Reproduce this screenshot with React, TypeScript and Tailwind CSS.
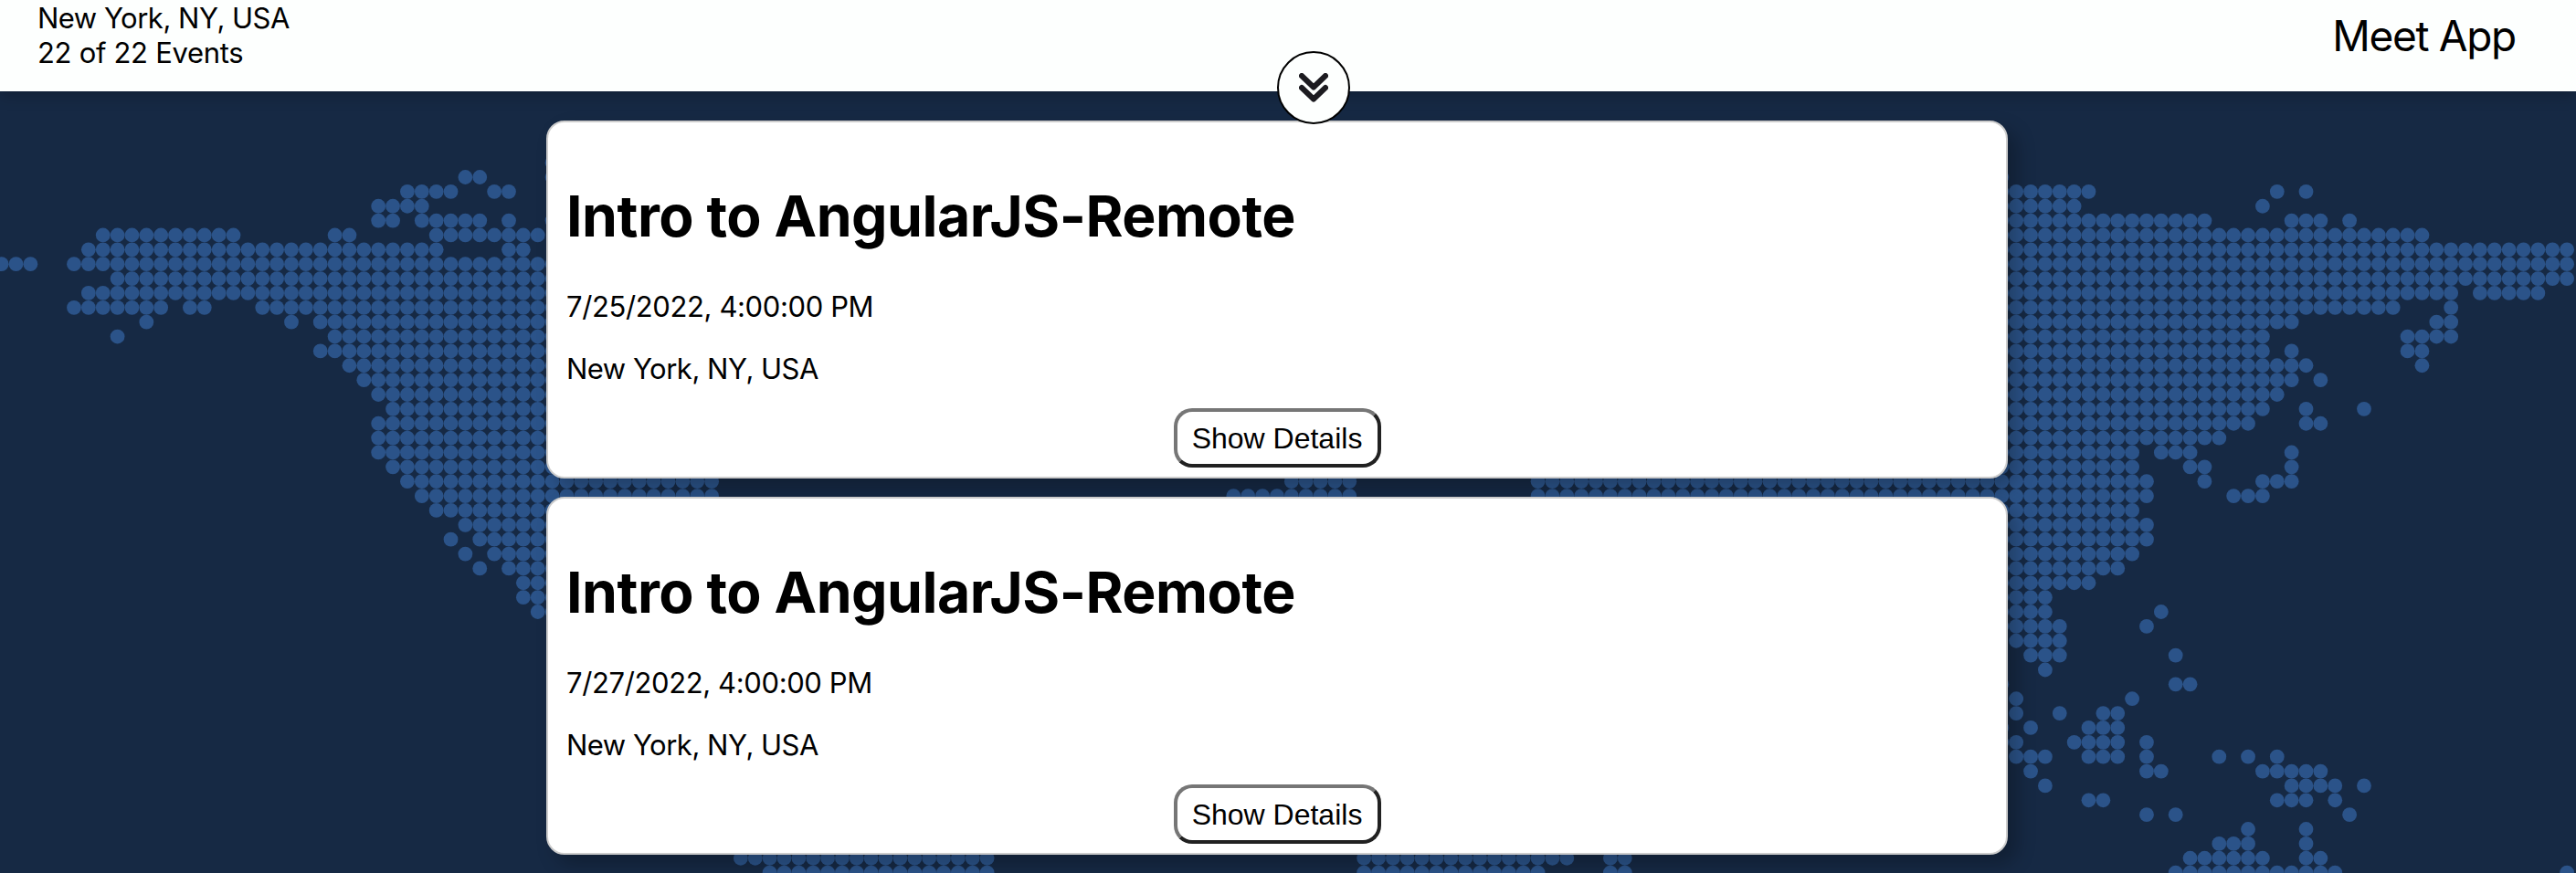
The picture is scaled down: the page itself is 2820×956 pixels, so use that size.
const PITCH = 15.867;

// Filled column ranges of the dotted world map, by row.
const MAP_ROWS: [number, string][] = [
  [-1, '38'],
  [0, '32-33 38 138'],
  [1, '28-31 34-35 138-144 157 159'],
  [2, '26-29 138-143 156'],
  [3, '26-27 29-33 35 38 138-152 158-160 162'],
  [4, '7-16 23-24 30-37 138-167'],
  [5, '6-30 35-36 138-177'],
  [6, '0-2 5-38 138-177'],
  [7, '8-38 138-177'],
  [8, '6-38 138-169 171-175'],
  [9, '5-11 13-14 18-38 138-165 169'],
  [10, '10 20 22-38 138-158 168-169'],
  [11, '8 23-38 138-156 166-169'],
  [12, '22-38 138-156 158 166-167'],
  [13, '24-38 138-159 167'],
  [14, '25-38 138-158 160'],
  [15, '26-38 138-157'],
  [16, '27-38 138-156 159 163'],
  [17, '26-38 138-155 159-160'],
  [18, '26-38 138-153'],
  [19, '26-38 138-147 149-151 158'],
  [20, '27-38 138-147 151-152 158'],
  [21, '28-49 89-93 106-148 152 156-158'],
  [22, '29-49 85-93 106-148 154-156'],
  [23, '30-38 138-147'],
  [24, '32-38 138-148'],
  [25, '31 33-38 138-148'],
  [26, '32 34-38 138-147'],
  [27, '33 35-38 138-146'],
  [28, '36-38 138-144'],
  [29, '36-38 138-141'],
  [30, '37-38 138-141 149'],
  [31, '138-142 148'],
  [32, '139-142'],
  [33, '140-142 150'],
  [34, '141'],
  [35, '138 150-151'],
  [36, '139 147'],
  [37, '139 142 145-146'],
  [38, '138 140 144-146'],
  [39, '138-139 143-146 148'],
  [40, '139-141 144-146 148 153 155 157'],
  [41, '140 148-149 156-160'],
  [42, '141 158-161 163'],
  [43, '144-145 157-159 161'],
  [44, '148 150 162'],
  [45, '155 159'],
  [46, '153-155 159'],
  [47, '51-68 94-108 111-112 151-156 159-160'],
  [48, '53-68 94-106 111-112 150-161 177'],
];

function WorldMap() {
  const dots = MAP_ROWS.flatMap(([row, spans]) =>
    spans.split(' ').flatMap((span) => {
      const [from, to = from] = span.split('-').map(Number);
      return Array.from({ length: to - from + 1 }, (_, i) => (
        <circle key={`${row}-${from + i}`} cx={1.65 + (from + i) * PITCH} cy={194 + row * PITCH} r={7.9} />
      ));
    }),
  );
  return (
    <svg className="absolute inset-0 h-full w-full fill-[#2b5389]" viewBox="0 0 2820 956" aria-hidden="true">
      {dots}
    </svg>
  );
}

function EventCard({ date }: { date: string }) {
  return (
    <li className="flex h-[392px] w-[1600px] flex-col rounded-[20px] border-2 border-[#ccc] bg-white px-5 shadow-[10px_10px_20px_rgba(0,0,0,0.25)]">
      <h1 className="mt-[64px] text-[62.5px] leading-[76px] font-bold tracking-[-0.48px] whitespace-nowrap">Intro to AngularJS-Remote</h1>
      <p className="mt-[43px] text-[31px] leading-[38px] tracking-[-0.38px]">{date}</p>
      <p className="mt-[30px] text-[31px] leading-[38px] tracking-[-0.5px]">New York, NY, USA</p>
      <button className="mt-[24px] h-[65px] w-[227px] self-center rounded-[20px] border-4 border-t-[#767676] border-r-[#212121] border-b-[#212121] border-l-[#767676] bg-white font-['Liberation_Sans',sans-serif] text-[32px] leading-none whitespace-nowrap">
        Show Details
      </button>
    </li>
  );
}

export default function App() {
  return (
    <div className="relative h-[956px] w-full overflow-hidden bg-[#162944] font-['Inter',sans-serif] text-black">
      <WorldMap />
      <header className="relative z-10 flex h-[100px] justify-between bg-[#fdfffe] shadow-[0_4px_16px_rgba(0,0,0,0.25)]">
        <div className="pt-px pl-[41px] text-[31px] leading-[38px]">
          <p className="tracking-[-0.5px]">New York, NY, USA</p>
          <p className="tracking-[-0.3px]">22 of 22 Events</p>
        </div>
        <p className="pt-[10px] pr-[66px] text-[46px] leading-[58px] tracking-[-1.3px]">Meet App</p>
        <button className="absolute top-14 left-[1398px] flex size-20 items-center justify-center rounded-full border-2 border-black bg-[#fdfffe]" aria-label="Expand">
          <svg className="size-8 fill-none stroke-[#1c1b20] stroke-[6]" viewBox="0 0 32 32" strokeLinecap="round" strokeLinejoin="round">
            <path d="M3 3L16 15.5L29 3M3 16L16 28.5L29 16" />
          </svg>
        </button>
      </header>
      <ul className="relative flex flex-col gap-5 pt-8 pl-[598px]">
        <EventCard date="7/25/2022, 4:00:00 PM" />
        <EventCard date="7/27/2022, 4:00:00 PM" />
      </ul>
    </div>
  );
}
